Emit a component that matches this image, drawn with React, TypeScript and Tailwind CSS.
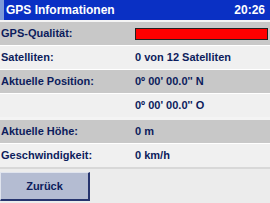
const rows = [
  { label: 'GPS-Qualität:', value: null, tone: 'grey' },
  { label: 'Satelliten:', value: '0 von 12 Satelliten', tone: 'light' },
  { label: 'Aktuelle Position:', value: '0º 00\' 00.0\'\' N', tone: 'grey' },
  { label: '', value: '0º 00\' 00.0\'\' O', tone: 'light' },
]

const rows2 = [
  { label: 'Aktuelle Höhe:', value: '0 m', tone: 'grey' },
  { label: 'Geschwindigkeit:', value: '0 km/h', tone: 'light' },
]

function Row({ label, value, tone }: { label: string; value: string | null; tone: string }) {
  return (
    <div
      className={`flex h-[23px] items-center ${tone === 'grey' ? 'bg-[#c8c8c8]' : 'bg-[#f0f0f0]'}`}
    >
      <div className="w-[135px] pl-[1px]">{label}</div>
      {value === null ? (
        <div className="h-[12px] w-[133px] border border-[#202020] bg-[#ff0000]" />
      ) : (
        <div>{value}</div>
      )}
    </div>
  )
}

export default function App() {
  return (
    <div
      className="flex h-[203px] w-[270px] flex-col overflow-hidden bg-[#f4f4f4] text-[11px] font-bold text-[#0c1c5c]"
      style={{ fontFamily: '"Liberation Sans", Arial, sans-serif' }}
    >
      <div className="flex h-[20px] items-center bg-[#0a30c4] text-[12px] text-white">
        <div className="h-full w-[4px] bg-[#7d9ad8]" />
        <div className="flex-1 pl-[2px]">GPS Informationen</div>
        <div className="pr-[5px]">20:26</div>
      </div>
      <div className="mt-[2px] flex flex-col gap-[1px] bg-white">
        {rows.map((r, i) => (
          <Row key={i} {...r} />
        ))}
      </div>
      <div className="mt-[3px] flex flex-col gap-[1px] bg-white">
        {rows2.map((r, i) => (
          <Row key={i} {...r} />
        ))}
      </div>
      <div className="flex-1 border-t-2 border-[#d8d8d8] bg-[#ececec] pt-[3px]">
        <button className="flex h-[29px] w-[90px] items-center justify-center border-t border-l border-[#e0e4ee] border-r-2 border-b-2 border-r-[#26346e] border-b-[#26346e] bg-[#b4bcd2] font-bold text-[#0c1c5c]">
          Zurück
        </button>
      </div>
    </div>
  )
}
